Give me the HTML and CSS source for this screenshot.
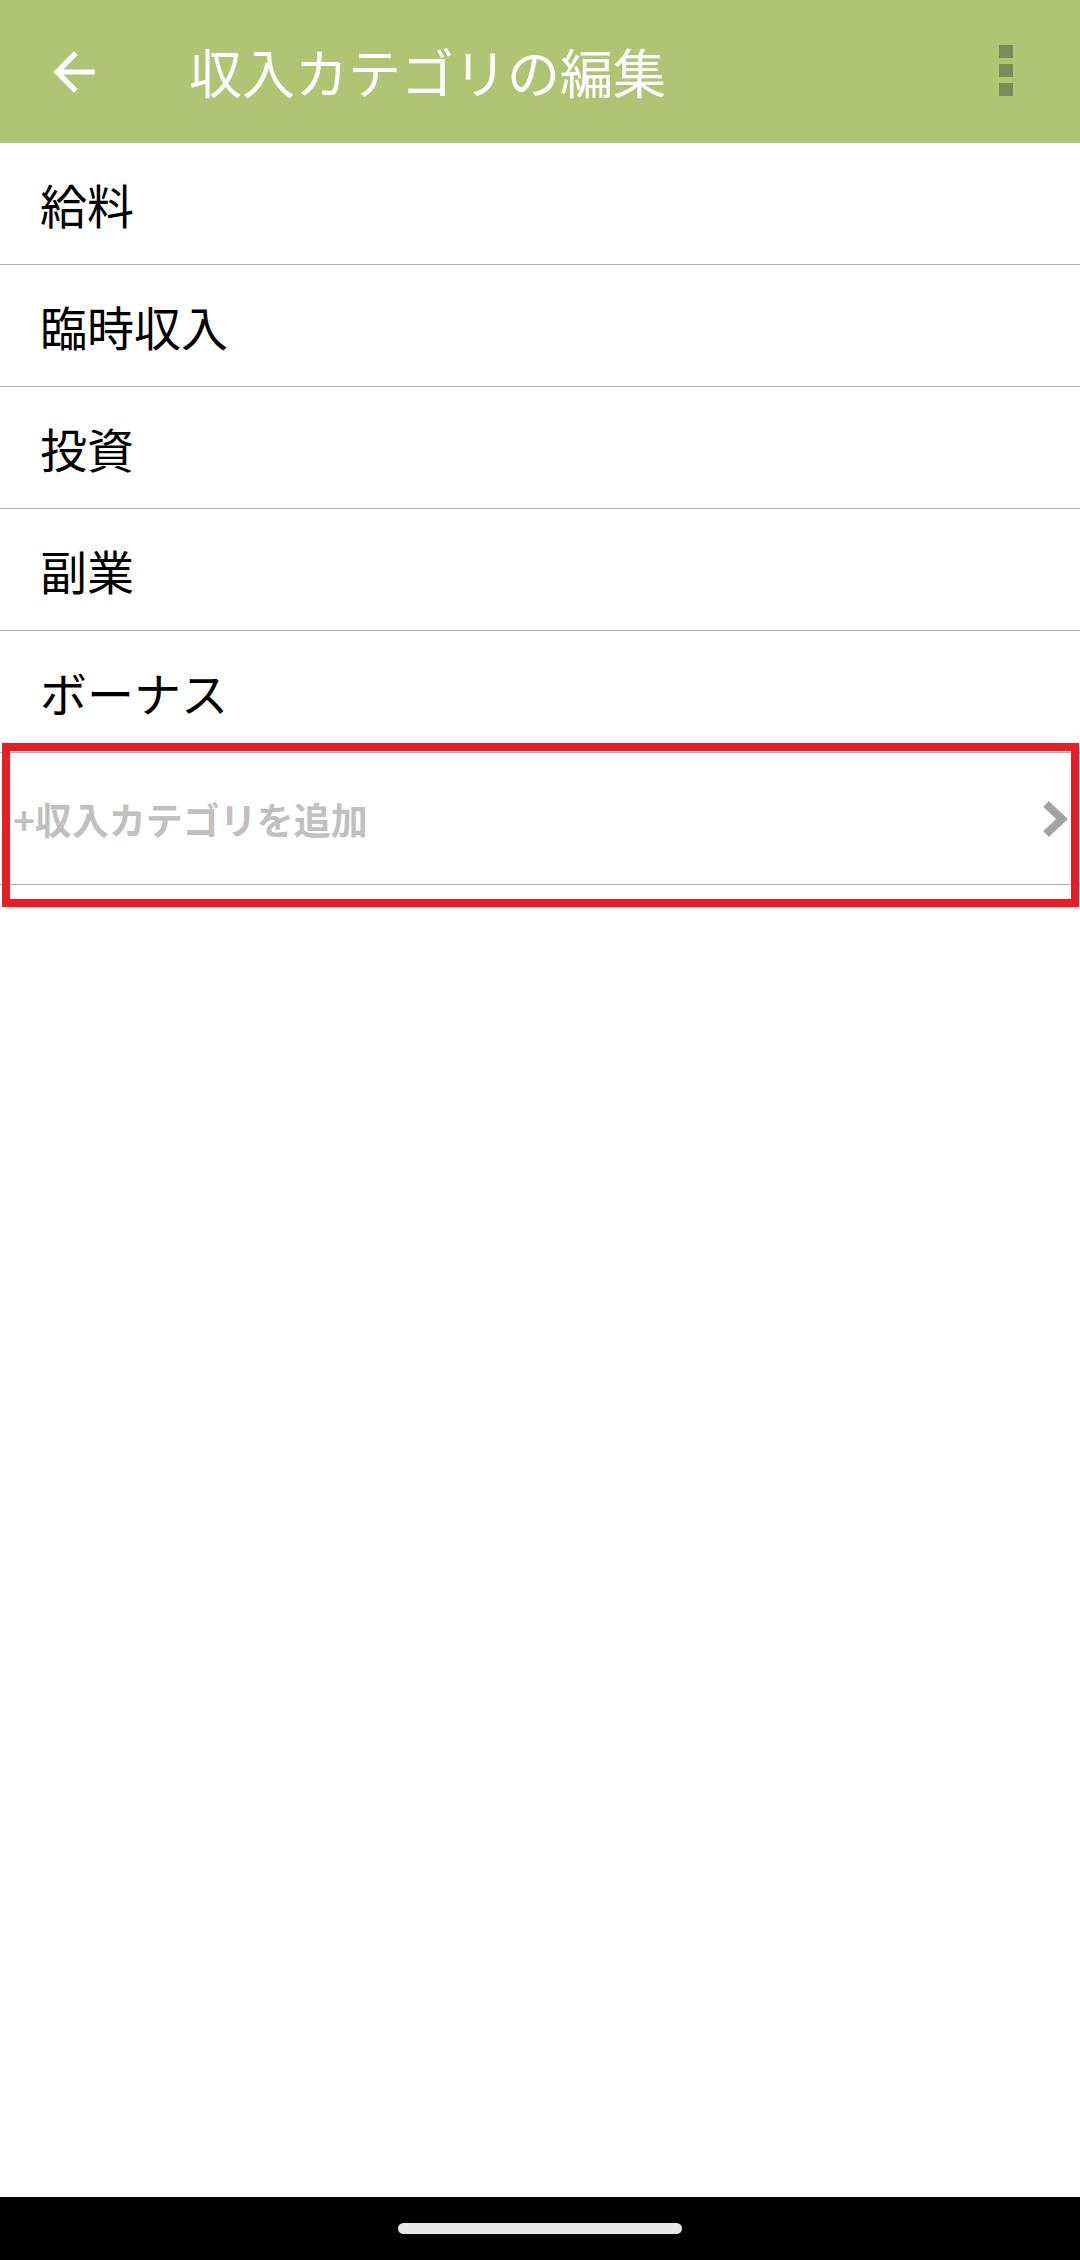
FILE: index.html
```html
<!DOCTYPE html>
<html lang="ja">
<head>
<meta charset="utf-8">
<title>収入カテゴリの編集</title>
<link rel="stylesheet" href="styles.css">
</head>
<body>
<div class="screen">
  <header class="appbar">
    <svg class="back" viewBox="0 0 24 24" width="62" height="62"><path d="M20 11H7.83l5.59-5.59L12 4l-8 8 8 8 1.41-1.41L7.83 13H20v-2z" fill="#ffffff"/></svg>
    <h1 class="title">収入カテゴリの編集</h1>
    <div class="menu"><span class="dot"></span><span class="dot"></span><span class="dot"></span></div>
  </header>
  <ul class="list">
    <li class="row">給料</li>
    <li class="row">臨時収入</li>
    <li class="row">投資</li>
    <li class="row">副業</li>
    <li class="row">ボーナス</li>
    <li class="row add">
      <span class="add-text">+収入カテゴリを追加</span>
      <svg class="chev" viewBox="0 0 26 38" width="26" height="38"><polyline points="4,4 20,19 4,34" fill="none" stroke="#a3a3a3" stroke-width="8"/></svg>
      <div class="highlight"></div>
    </li>
  </ul>
  <div class="spacer"></div>
  <div class="navbar"><span class="pill"></span></div>
</div>
</body>
</html>
```

FILE: styles.css
```css
html, body {
  margin: 0;
  padding: 0;
  background: #ffffff;
}
body {
  font-family: "Noto Sans CJK JP", "Noto Sans", sans-serif;
}
.screen {
  width: 1080px;
  height: 2260px;
  display: flex;
  flex-direction: column;
}
.appbar {
  height: 143px;
  flex: none;
  background: #b0c474;
  display: flex;
  align-items: center;
  padding-left: 43px;
  box-sizing: border-box;
}
.back {
  flex: none;
  display: block;
}
.title {
  margin: 0 0 0 84px;
  font-size: 53px;
  font-weight: 400;
  color: #ffffff;
  line-height: 1;
  flex: 1;
}
.menu {
  width: 14px;
  margin-right: 67px;
  display: flex;
  flex-direction: column;
  gap: 6px;
  margin-top: -2px;
}
.dot {
  width: 14px;
  height: 13px;
  background: #7d8c57;
}
.list {
  list-style: none;
  margin: 0;
  padding: 0;
}
.row {
  height: 121px;
  border-bottom: 1px solid #b0b0b0;
  display: flex;
  align-items: center;
  padding-left: 40px;
  font-size: 47px;
  color: #000000;
}
.row.add {
  height: 131px;
  padding-left: 13px;
  padding-right: 12px;
  justify-content: space-between;
  position: relative;
}
.add-text {
  font-size: 37px;
  font-weight: 700;
  color: #c0c0c0;
}
.chev {
  display: block;
}
.highlight {
  position: absolute;
  top: -10px;
  left: 2px;
  right: 1px;
  bottom: -23px;
  border: 8px solid #ec1c24;
  box-sizing: border-box;
}
.spacer {
  flex: 1;
}
.navbar {
  height: 63px;
  flex: none;
  background: #000000;
  display: flex;
  justify-content: center;
  align-items: flex-start;
}
.pill {
  margin-top: 26px;
  width: 284px;
  height: 11px;
  border-radius: 6px;
  background: #e8e8e8;
}
```
